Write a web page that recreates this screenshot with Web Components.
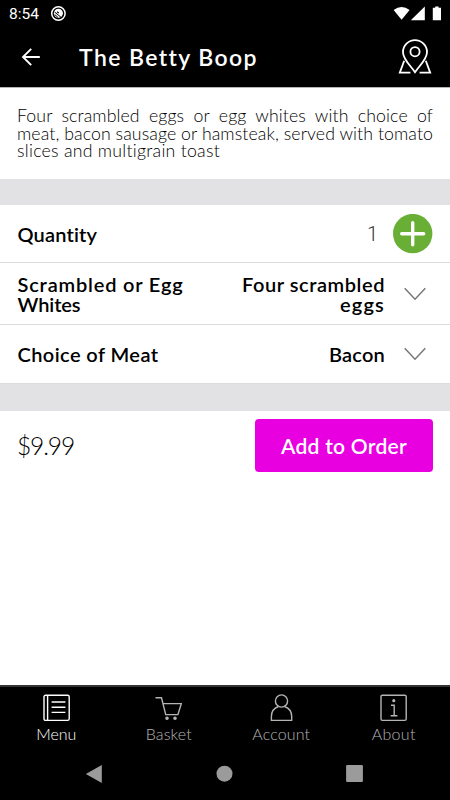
<!DOCTYPE html>
<html lang="en">
<head>
<meta charset="utf-8">
<meta name="viewport" content="width=device-width, initial-scale=1">
<title>The Betty Boop</title>
<style>
  html, body { margin: 0; height: 100%; }
  body {
    background: #fff;
    color: #000;
    font-family: Lato, "Open Sans", sans-serif;
  }
</style>
</head>
<body>
<order-screen>
  <status-bar slot="top" time="8:54"></status-bar>
  <title-bar slot="top"><text-line width="178">The Betty Boop</text-line></title-bar>
  <item-description>
    <text-line width="416" stretch="words">Four scrambled eggs or egg whites with choice of</text-line>
    <text-line width="416" stretch="words">meat, bacon sausage or hamsteak, served with tomato</text-line>
    <text-line width="203">slices and multigrain toast</text-line>
  </item-description>
  <section-gap style="--gap: 26px"></section-gap>
  <option-row kind="quantity" style="--row: 57px">
    <text-line slot="label" width="80">Quantity</text-line>
    <span slot="value">1</span>
  </option-row>
  <option-row kind="choice" style="--row: 61px">
    <text-line slot="label" width="166">Scrambled or Egg</text-line>
    <text-line slot="label" width="63">Whites</text-line>
    <text-line slot="value" width="143">Four scrambled</text-line>
    <text-line slot="value" width="45">eggs</text-line>
  </option-row>
  <option-row kind="choice" style="--row: 58px">
    <text-line slot="label" width="141">Choice of Meat</text-line>
    <text-line slot="value" width="56">Bacon</text-line>
  </option-row>
  <section-gap style="--gap: 27px"></section-gap>
  <order-footer>
    <text-line slot="price" width="57">$9.99</text-line>
    <text-line width="126">Add to Order</text-line>
  </order-footer>
  <tab-bar slot="bottom">
    <tab-item icon="menu" active><text-line width="40">Menu</text-line></tab-item>
    <tab-item icon="basket"><text-line width="46">Basket</text-line></tab-item>
    <tab-item icon="account"><text-line width="58">Account</text-line></tab-item>
    <tab-item icon="about"><text-line width="44">About</text-line></tab-item>
  </tab-bar>
  <system-nav slot="bottom"></system-nav>
</order-screen>

<script>
function define(name, markup, setup) {
  const template = document.createElement('template');
  template.innerHTML = markup;
  customElements.define(name, class extends HTMLElement {
    constructor() {
      super();
      this.attachShadow({ mode: 'open' }).append(template.content.cloneNode(true));
    }

    connectedCallback() {
      if (setup) setup(this, this.shadowRoot);
    }
  });
}

define('order-screen', `
  <style>
    :host { display: flex; flex-direction: column; height: 800px; width: 450px; overflow: hidden; }
    main { flex: 1; min-height: 0; }
  </style>
  <header><slot name="top"></slot></header>
  <main><slot></slot></main>
  <footer><slot name="bottom"></slot></footer>
`);

define('status-bar', `
  <style>
    :host {
      display: flex;
      align-items: center;
      box-sizing: border-box;
      height: 27px;
      padding: 0 8px 0 9px;
      background: #000;
      color: #fff;
      font: 15.5px/27px Roboto, sans-serif;
    }
    .time { padding-top: 1px; }
    .app { margin: 0 auto 0 11px; }
    svg { display: block; }
  </style>
  <span class="time"></span>
  <svg class="app" width="16" height="16" viewBox="0 0 16 16" fill="none" stroke="#fff">
    <circle cx="8.4" cy="7.5" r="6.7" stroke-width="1.5"/>
    <circle cx="8.4" cy="7.2" r="4.5" fill="#fff" stroke="none"/>
    <path d="M4.6 6 11.4 11.6M4.8 8.6l3 2.6" stroke="#000" stroke-width="1"/>
    <path d="M7 5.8 8.8 7" stroke="#000" stroke-width="1.2"/>
  </svg>
  <svg width="50" height="16" viewBox="0 0 50 16" fill="#fff">
    <path d="M1.6 4.1Q9.6 -2 17.6 4.1L9.6 13.8Z"/>
    <path d="M18.8 14.2 32.8 .4V14.2Z"/>
    <path d="M40.8 1.8h2.4V.4h3.4v1.4h2.4v12.4H40.8Z"/>
  </svg>
`, (host, root) => {
  root.querySelector('.time').textContent = host.getAttribute('time');
});

define('title-bar', `
  <style>
    :host {
      display: flex;
      align-items: center;
      box-sizing: border-box;
      height: 61px;
      padding: 0 17px 0 21px;
      background: #000;
      border-bottom: 1px solid #b5b5b5;
      color: #fff;
      font-size: 23px;
      font-weight: 600;
    }
    .title { flex: 1; margin: -1px 0 0 38px; }
    svg { display: block; flex: none; }
  </style>
  <svg width="20" height="20" viewBox="0 0 20 20" fill="none" stroke="#fff" stroke-width="1.9">
    <path d="M18.8 10H2M10.2 1.8 2 10l8.2 8.2"/>
  </svg>
  <div class="title"><slot></slot></div>
  <svg width="36" height="36" viewBox="0 0 36 36" fill="none" stroke="#fff" stroke-width="1.8">
    <path d="M18 33.2C14 27 6 20.5 6 13.2a12 12 0 0 1 24 0C30 20.5 22 27 18 33.2Z"/>
    <circle cx="18" cy="12.7" r="4.6"/>
    <path d="M7.2 21.8 2.8 33.6H13.4M28.8 21.8l4.4 11.8H22.6"/>
  </svg>
`);

define('item-description', `
  <style>
    :host {
      display: block;
      box-sizing: border-box;
      height: 91px;
      padding: 19px 16px 0 17px;
      font-size: 17.7px;
      font-weight: 300;
      line-height: 17.6px;
      letter-spacing: .1px;
    }
  </style>
  <slot></slot>
`);

define('section-gap', `
  <style>
    :host { display: block; height: var(--gap); background: #e2e2e4; }
  </style>
`);

define('option-row', `
  <style>
    :host {
      display: flex;
      align-items: center;
      box-sizing: content-box;
      height: var(--row);
      padding: 0 17px 0 17.5px;
      border-bottom: 1px solid #dcdcdc;
      font-size: 20px;
      font-weight: 600;
      line-height: 20px;
    }
    .value { margin-left: auto; text-align: right; }
    :host([kind="quantity"]) .value {
      color: #333;
      font-family: Roboto, sans-serif;
      font-weight: 300;
    }
    .control { display: flex; justify-content: center; width: 40px; margin-left: 15px; }
    :host([kind="choice"]) .control { width: 36px; margin-left: 12px; }
    svg { display: none; }
    :host([kind="quantity"]) .plus,
    :host([kind="choice"]) .chevron { display: block; }
  </style>
  <div class="label"><slot name="label"></slot></div>
  <div class="value"><slot name="value"></slot></div>
  <div class="control">
    <svg class="plus" width="40" height="40" viewBox="0 0 40 40">
      <circle cx="19.7" cy="19.6" r="19.7" fill="#6aaf35"/>
      <path d="M19.7 8.7v22M8.7 19.7h22" stroke="#fff" stroke-width="3.4" stroke-linecap="round"/>
    </svg>
    <svg class="chevron" width="24" height="14" viewBox="0 0 24 14" fill="none" stroke="#777" stroke-width="1.5">
      <path d="m1.7 1.2 10.3 11 10.3-11"/>
    </svg>
  </div>
`);

define('order-footer', `
  <style>
    :host {
      display: flex;
      align-items: center;
      justify-content: space-between;
      height: 53px;
      padding: 8px 17px 0 17px;
    }
    .price { font-size: 24.5px; font-weight: 300; }
    button {
      display: flex;
      align-items: center;
      justify-content: center;
      width: 178px;
      height: 53px;
      padding: 0;
      border: 0;
      border-radius: 4px;
      background: #e900e1;
      color: #fff;
      font: 600 21px/24px Lato, sans-serif;
    }
  </style>
  <div class="price"><slot name="price"></slot></div>
  <button><slot></slot></button>
`);

define('tab-bar', `
  <style>
    :host {
      display: grid;
      grid-template-columns: repeat(4, 1fr);
      box-sizing: border-box;
      height: 62px;
      border-top: 2px solid #333;
      background: #000;
    }
  </style>
  <slot></slot>
`);

const tabIcons = {
  menu: `
    <rect x="1" y="1.2" width="25.2" height="25.2" rx="1.6"/>
    <path d="M4.6 1.2v25.2M8.6 8h13.8M8.6 13.2h13.8M8.6 18.4h13.8"/>`,
  basket: `
    <path d="M.5 3.8h6L10.7 20.6h12.2L26.3 9.6H8"/>
    <circle cx="12" cy="24.2" r="1.1" fill="currentColor"/>
    <circle cx="20" cy="24.2" r="1.1" fill="currentColor"/>`,
  account: `
    <circle cx="13.5" cy="7" r="6.1"/>
    <path d="M10.4 12.5c-4 1.5-7 5-7 9.9v4H23.7v-4c0-4.9-3.1-8.4-7.1-9.9"/>`,
  about: `
    <rect x="1" y="1.2" width="25.2" height="25.2" rx="1.4"/>
    <path d="M11 11.2h3.2v10.5M10.6 21.8h6.8"/>
    <circle cx="13.8" cy="6.7" r=".9" fill="currentColor"/>`
};

define('tab-item', `
  <style>
    :host {
      display: flex;
      flex-direction: column;
      align-items: center;
      padding-top: 7px;
      color: #b4b4b4;
      font-size: 16px;
      font-weight: 300;
      line-height: 20px;
    }
    :host([active]) { color: #fff; }
    svg { display: block; margin-bottom: 2px; }
  </style>
  <svg width="27" height="28" viewBox="0 0 27 28" fill="none" stroke="currentColor" stroke-width="1.4"></svg>
  <slot></slot>
`, (host, root) => {
  root.querySelector('svg').innerHTML = tabIcons[host.getAttribute('icon')];
});

define('system-nav', `
  <style>
    :host {
      display: flex;
      justify-content: space-between;
      box-sizing: border-box;
      height: 53px;
      padding: 18px 86px 0 85px;
      background: #000;
    }
    svg { display: block; }
  </style>
  <svg width="18" height="18" viewBox="0 0 18 18" fill="#9b9b9b"><path d="M.8 9 16.8 0v18Z"/></svg>
  <svg width="18" height="18" viewBox="0 0 18 18" fill="#9b9b9b"><circle cx="8.5" cy="8.7" r="8"/></svg>
  <svg width="18" height="18" viewBox="0 0 18 18" fill="#9b9b9b"><rect x=".1" y=".1" width="16.8" height="16.8" rx="1"/></svg>
`);

// one line of type, set to an optical width;
// defined last so that it measures the fonts its parents give it
define('text-line', `
  <style>
    :host { display: block; }
    span { display: inline-block; white-space: pre; vertical-align: top; }
  </style>
  <span><slot></slot></span>
`, (host, root) => {
  const span = root.querySelector('span');
  const text = host.textContent;
  const spare = Number(host.getAttribute('width')) - span.getBoundingClientRect().width;
  if (host.getAttribute('stretch') === 'words') {
    span.style.wordSpacing = `${(spare / (text.split(' ').length - 1)).toFixed(3)}px`;
  } else {
    const base = parseFloat(getComputedStyle(span).letterSpacing) || 0;
    span.style.letterSpacing = `${(base + spare / text.length).toFixed(3)}px`;
  }
});
</script>
</body>
</html>
